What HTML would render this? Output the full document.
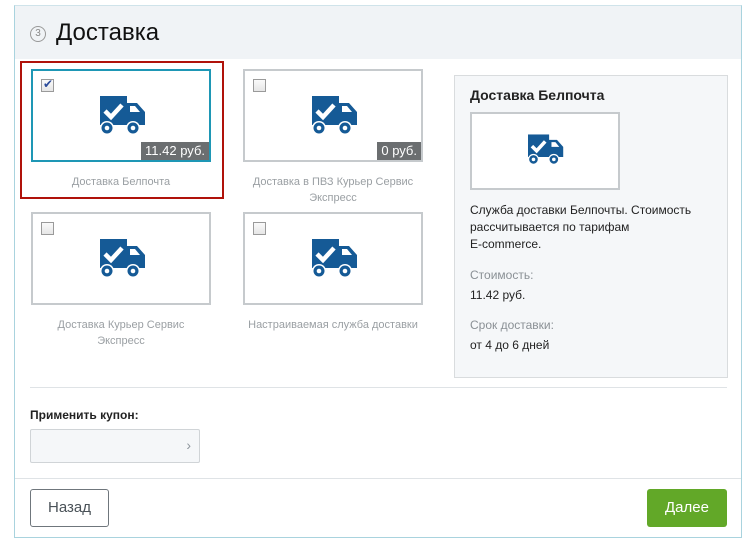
<!DOCTYPE html>
<html><head><meta charset="utf-8"><style>
*{box-sizing:border-box}
body{margin:0;width:756px;height:539px;background:#fff;font-family:"Liberation Sans",sans-serif;position:relative;overflow:hidden}
.a{position:absolute}
.panel{left:14px;top:5px;width:728px;height:533px;border:1px solid #a9d3de;border-top:1px solid #cfe3ea}
.head{left:15px;top:6px;width:726px;height:53px;background:#f0f3f6}
.card{position:absolute;width:180px;height:93px;border:2px solid #c6cacd;background:#fff}
.card.sel{border-color:#1e97b5}
.cb{position:absolute;left:8px;top:8px;width:13px;height:13px;border:1px solid #9a9a9a;background:linear-gradient(#fafafa,#e6e6e6)}
.price{position:absolute;right:0;bottom:0;background:#6b6e70;color:#fff;font-size:13px;padding:1px 4px;line-height:16px}
.lbl{position:absolute;width:200px;text-align:center;font-size:11px;color:#9a9fa3;line-height:16px}
.truck{position:absolute;left:67px;top:25px}
</style></head><body>
<svg width="0" height="0" style="position:absolute"><defs><symbol id="t" viewBox="0 0 46 40"><path d="M0 0h27v29H0z M27 7h10l8 9v13H27z" fill="#155a96"/><path d="M30 10h5l5 6h-10z" fill="#fff"/><circle cx="7" cy="32" r="7" fill="#fff"/><circle cx="7" cy="32" r="5.5" fill="#155a96"/><circle cx="7" cy="32" r="2.3" fill="#fff"/><circle cx="33" cy="32" r="7" fill="#fff"/><circle cx="33" cy="32" r="5.5" fill="#155a96"/><circle cx="33" cy="32" r="2.3" fill="#fff"/><path d="M5 15l6 6 11-12" stroke="#fff" stroke-width="4.5" fill="none"/></symbol></defs></svg>
<div class="a panel"></div>
<div class="a head"></div>
<div class="a" style="left:30px;top:26px;width:16px;height:16px;border:1px solid #999;border-radius:50%;font-size:10px;color:#888;text-align:center;line-height:14px">3</div>
<div class="a" style="left:56px;top:19px;font-size:24px;color:#111">Доставка</div>
<div class="a" style="left:20px;top:61px;width:204px;height:138px;border:2px solid #b0120a"></div>
<div class="card sel" style="left:31px;top:69px"><div class="cb"><span style="position:absolute;left:1px;top:-3px;font-size:12px;color:#2b4b9a">✔</span></div><svg class="truck" width="46" height="40"><use href="#t"/></svg><div class="price">11.42 руб.</div></div>
<div class="lbl" style="left:21px;top:174px">Доставка Белпочта</div>
<div class="card" style="left:243px;top:69px"><div class="cb"></div><svg class="truck" width="46" height="40"><use href="#t"/></svg><div class="price">0 руб.</div></div>
<div class="lbl" style="left:233px;top:174px">Доставка в ПВЗ Курьер Сервис Экспресс</div>
<div class="card" style="left:31px;top:212px"><div class="cb"></div><svg class="truck" width="46" height="40"><use href="#t"/></svg></div>
<div class="lbl" style="left:21px;top:317px;padding:0 20px">Доставка Курьер Сервис Экспресс</div>
<div class="card" style="left:243px;top:212px"><div class="cb"></div><svg class="truck" width="46" height="40"><use href="#t"/></svg></div>
<div class="lbl" style="left:233px;top:317px">Настраиваемая служба доставки</div>
<div class="a" style="left:454px;top:75px;width:274px;height:303px;background:#f5f7f9;border:1px solid #d9dcde"></div>
<div class="a" style="left:470px;top:87px;font-size:14px;font-weight:bold;color:#222">Доставка Белпочта</div>
<div class="a" style="left:470px;top:112px;width:150px;height:78px;background:#fff;border:2px solid #c6cacd"><svg style="position:absolute;left:56px;top:20px" width="36" height="32" viewBox="0 0 46 40"><use href="#t"/></svg></div>
<div class="a" style="left:470px;top:202px;font-size:12px;line-height:17px;color:#222;width:260px">Служба доставки Белпочты. Стоимость рассчитывается по тарифам<br>E-commerce.</div>
<div class="a" style="left:470px;top:268px;font-size:12px;color:#8a9095">Стоимость:</div>
<div class="a" style="left:470px;top:288px;font-size:12px;color:#222">11.42 руб.</div>
<div class="a" style="left:470px;top:318px;font-size:12px;color:#8a9095">Срок доставки:</div>
<div class="a" style="left:470px;top:338px;font-size:12px;color:#222">от 4 до 6 дней</div>
<div class="a" style="left:30px;top:387px;width:697px;height:1px;background:#dfe3e6"></div>
<div class="a" style="left:30px;top:408px;font-size:12px;font-weight:bold;color:#222">Применить купон:</div>
<div class="a" style="left:30px;top:429px;width:170px;height:34px;background:#f5f7f9;border:1px solid #d0d4d7;border-radius:2px"><span style="position:absolute;right:8px;top:7px;color:#8d959c;font-size:14px">›</span></div>
<div class="a" style="left:15px;top:478px;width:726px;height:1px;background:#dfe3e6"></div>
<div class="a" style="left:30px;top:489px;width:79px;height:38px;border:1px solid #6f767c;border-radius:3px;text-align:center;line-height:36px;font-size:15px;color:#4a5258">Назад</div>
<div class="a" style="left:647px;top:489px;width:80px;height:38px;background:#62a828;border-radius:3px;text-align:center;line-height:38px;font-size:15px;color:#fff">Далее</div>
</body></html>
